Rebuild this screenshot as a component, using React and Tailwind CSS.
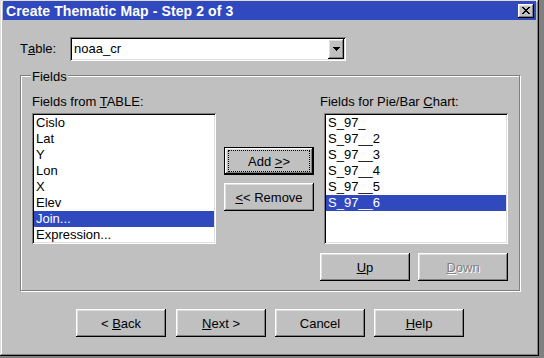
import React from "react";

const raised =
  "shadow-[inset_-1px_-1px_0_#000,inset_1px_1px_0_#fff,inset_-2px_-2px_0_#808080,inset_2px_2px_0_#dfdfdf]";
const sunken =
  "shadow-[inset_1px_1px_0_#808080,inset_-1px_-1px_0_#fff,inset_2px_2px_0_#000,inset_-2px_-2px_0_#dfdfdf]";

function Btn({ children, className = "", disabled = false }) {
  return (
    <div
      className={`flex items-center justify-center h-[28px] w-[90px] bg-[#c0c0c0] ${raised} ${className} ${
        disabled ? "text-[#808080] [text-shadow:1px_1px_0_#fff]" : ""
      }`}
    >
      <span className="leading-[15px]">{children}</span>
    </div>
  );
}

function ListBox({ items, selected, className = "" }) {
  return (
    <div className={`h-[131px] w-[184px] bg-white p-[2px] overflow-hidden ${sunken} ${className}`}>
      <div className="h-full overflow-hidden">
        {items.map((it, i) => (
          <div
            key={i}
            className={`h-[16px] leading-[16px] pl-[2px] whitespace-nowrap ${
              i === selected ? "bg-[#3049bf] text-white" : "text-black"
            }`}
          >
            {it}
          </div>
        ))}
      </div>
    </div>
  );
}

export default function App() {
  return (
    <div className="w-[544px] h-[358px] bg-[#808080] overflow-hidden font-['Liberation_Sans',Arial,sans-serif] text-[13px] text-black">
      <div className="w-[539px] h-[356px] bg-[#c0c0c0] pt-[1px] px-[3px] flex flex-col shadow-[inset_-1px_-1px_0_#000,inset_1px_1px_0_#dfdfdf,inset_-2px_-2px_0_#808080,inset_2px_2px_0_#fff]">
        {/* Title bar */}
        <div className="h-[19px] bg-[#3049bf] flex justify-between pl-[3px] pr-[2px]">
          <span className="text-white font-bold text-[14px] tracking-[0.1px] leading-[19px] pt-[1px]">
            Create Thematic Map - Step 2 of 3
          </span>
          <div className={`mt-[3px] w-[16px] h-[14px] bg-[#c0c0c0] flex items-center justify-center ${raised}`}>
            <svg width="8" height="7" viewBox="0 0 8 7" shapeRendering="crispEdges" className="mb-[1px]">
              <rect x="0" y="0" width="2" height="1" fill="#000" />
              <rect x="6" y="0" width="2" height="1" fill="#000" />
              <rect x="1" y="1" width="2" height="1" fill="#000" />
              <rect x="5" y="1" width="2" height="1" fill="#000" />
              <rect x="2" y="2" width="4" height="1" fill="#000" />
              <rect x="3" y="3" width="2" height="1" fill="#000" />
              <rect x="2" y="4" width="4" height="1" fill="#000" />
              <rect x="1" y="5" width="2" height="1" fill="#000" />
              <rect x="5" y="5" width="2" height="1" fill="#000" />
              <rect x="0" y="6" width="2" height="1" fill="#000" />
              <rect x="6" y="6" width="2" height="1" fill="#000" />
            </svg>
          </div>
        </div>

        {/* Table row */}
        <div className="flex mt-[17px] ml-[17px]">
          <div className="w-[50px] flex items-center">
            T<u>a</u>ble:
          </div>
          <div className={`w-[276px] h-[24px] bg-white p-[2px] flex ${sunken}`}>
            <div className="flex-1 flex items-center pl-[2px]">noaa_cr</div>
            <div className={`w-[16px] h-[20px] bg-[#c0c0c0] flex items-center justify-center ${raised}`}>
              <svg width="7" height="4" viewBox="0 0 7 4" shapeRendering="crispEdges">
                <rect x="0" y="0" width="7" height="1" fill="#000" />
                <rect x="1" y="1" width="5" height="1" fill="#000" />
                <rect x="2" y="2" width="3" height="1" fill="#000" />
                <rect x="3" y="3" width="1" height="1" fill="#000" />
              </svg>
            </div>
          </div>
        </div>

        {/* Fields group */}
        <div className="relative mt-[14px] ml-[17px] w-[500px] h-[216px] border border-[#808080] shadow-[inset_1px_1px_0_#fff,1px_1px_0_#fff] pt-[18px] pl-[11px] flex">
          <span className="absolute top-[-7px] left-[10px] px-[1px] bg-[#c0c0c0] leading-[15px]">Fields</span>

          {/* Left column */}
          <div className="w-[184px] flex flex-col">
            <div className="h-[15px] leading-[15px] whitespace-nowrap">
              Fields from <u>T</u>ABLE:
            </div>
            <ListBox
              className="mt-[4px]"
              items={["Cislo", "Lat", "Y", "Lon", "X", "Elev", "Join...", "Expression..."]}
              selected={6}
            />
          </div>

          {/* Middle buttons */}
          <div className="ml-[8px] w-[90px] pt-[53px] flex flex-col">
            <div className="h-[28px] w-[90px] bg-[#c0c0c0] px-[4px] py-[3px] shadow-[inset_0_0_0_1px_#000,inset_-2px_-2px_0_#000,inset_2px_2px_0_#fff,inset_-3px_-3px_0_#808080,inset_3px_3px_0_#dfdfdf]">
              <div className="w-full h-full border border-dotted border-black flex items-center justify-center">
                <span className="leading-[15px]">
                  Add <u>&gt;</u>&gt;
                </span>
              </div>
            </div>
            <Btn className="mt-[8px]">
              <u>&lt;</u>&lt; Remove
            </Btn>
          </div>

          {/* Right column */}
          <div className="ml-[6px] w-[188px] flex flex-col">
            <div className="h-[15px] leading-[15px] whitespace-nowrap">
              Fields for Pie/Bar <u>C</u>hart:
            </div>
            <ListBox
              className="mt-[4px] ml-[4px]"
              items={["S_97_", "S_97__2", "S_97__3", "S_97__4", "S_97__5", "S_97__6"]}
              selected={5}
            />
            <div className="flex mt-[9px]">
              <Btn>
                <u>U</u>p
              </Btn>
              <Btn className="ml-[8px]" disabled>
                <u>D</u>own
              </Btn>
            </div>
          </div>
        </div>

        {/* Bottom buttons */}
        <div className="flex mt-[18px] ml-[73px]">
          <Btn>
            &lt; <u>B</u>ack
          </Btn>
          <Btn className="ml-[10px]">
            <u>N</u>ext &gt;
          </Btn>
          <Btn className="ml-[9px]">Cancel</Btn>
          <Btn className="ml-[9px]">
            <u>H</u>elp
          </Btn>
        </div>
      </div>
    </div>
  );
}
